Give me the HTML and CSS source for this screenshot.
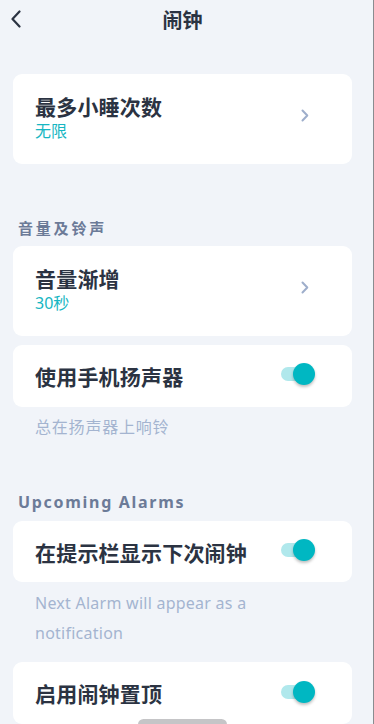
FILE: index.html
```html
<!DOCTYPE html>
<html lang="zh">
<head>
<meta charset="utf-8">
<link rel="stylesheet" href="styles.css">
</head>
<body>
<div class="screen">
  <div class="page">
    <header class="topbar">
      <svg class="back" width="12" height="18" viewBox="0 0 12 18"><path d="M9.5 1.5 L2.5 9 L9.5 16.5" fill="none" stroke="#2b3342" stroke-width="2.2" stroke-linecap="round" stroke-linejoin="round"/></svg>
      <div class="title">闹钟</div>
    </header>

    <div class="card card-tall first">
      <div class="texts">
        <div class="item-title">最多小睡次数</div>
        <div class="item-sub">无限</div>
      </div>
      <svg class="chev" width="8" height="13" viewBox="0 0 8 13"><path d="M1.5 1.5 L6.3 6.5 L1.5 11.5" fill="none" stroke="#9eaecb" stroke-width="2" stroke-linecap="round" stroke-linejoin="round"/></svg>
    </div>

    <div class="section sec1">音量及铃声</div>

    <div class="card card-tall">
      <div class="texts">
        <div class="item-title">音量渐增</div>
        <div class="item-sub">30秒</div>
      </div>
      <svg class="chev" width="8" height="13" viewBox="0 0 8 13"><path d="M1.5 1.5 L6.3 6.5 L1.5 11.5" fill="none" stroke="#9eaecb" stroke-width="2" stroke-linecap="round" stroke-linejoin="round"/></svg>
    </div>

    <div class="card card-short gap">
      <div class="item-title">使用手机扬声器</div>
      <div class="toggle"><span class="track"></span><span class="thumb"></span></div>
    </div>
    <div class="desc cjk">总在扬声器上响铃</div>

    <div class="section sec2">Upcoming Alarms</div>

    <div class="card card-short">
      <div class="item-title">在提示栏显示下次闹钟</div>
      <div class="toggle"><span class="track"></span><span class="thumb"></span></div>
    </div>
    <div class="desc latin">Next Alarm will appear as a notification</div>

    <div class="card card-short last">
      <div class="item-title">启用闹钟置顶</div>
      <div class="toggle"><span class="track"></span><span class="thumb"></span></div>
    </div>
  </div>
  <div class="edge"></div>
  <div class="homebar"></div>
</div>
</body>
</html>
```

FILE: styles.css
```css
html, body {
  margin: 0;
  padding: 0;
  background: #f1f4f9;
}
body {
  font-family: "Noto Sans", "Noto Sans CJK SC", sans-serif;
  color: #2b3342;
}
.screen {
  position: relative;
  width: 374px;
  height: 724px;
  overflow: hidden;
  display: flex;
}
.page {
  width: 365px;
  display: flex;
  flex-direction: column;
}
.edge {
  position: absolute;
  right: 0;
  top: 0;
  width: 1px;
  height: 724px;
  background: #8a8c90;
}
.homebar {
  position: absolute;
  left: 138px;
  bottom: -6px;
  width: 89px;
  height: 11px;
  border-radius: 6px;
  background: #c5c5c7;
}
.topbar {
  position: relative;
  height: 40px;
  display: flex;
  align-items: center;
  justify-content: center;
}
.back {
  position: absolute;
  left: 10px;
  top: 10px;
}
.title {
  font-family: "Noto Sans CJK SC", sans-serif;
  font-size: 20px;
  font-weight: 700;
  line-height: 40px;
  color: #2b3342;
}
.card {
  margin: 0 13px;
  background: #ffffff;
  border-radius: 9px;
  display: flex;
  align-items: center;
  justify-content: space-between;
  padding: 0 37px 0 22px;
}
.card-tall {
  padding-top: 18px;
  padding-bottom: 22px;
  padding-right: 43px;
}
.card-short {
  height: 64px;
}
.first {
  margin-top: 34px;
}
.gap {
  margin-top: 9px;
}
.item-title {
  font-family: "Noto Sans CJK SC", sans-serif;
  font-size: 21px;
  font-weight: 700;
  line-height: 28px;
  color: #2b3342;
  letter-spacing: 0.2px;
}
.item-sub {
  font-family: "Noto Sans", "Noto Sans CJK SC", sans-serif;
  font-size: 16px;
  line-height: 22px;
  color: #17b6c2;
}
.chev {
  display: block;
  margin-top: -3px;
}
.section {
  font-weight: 700;
  color: #6c7b98;
  line-height: 20px;
  padding-left: 18px;
}
.sec1 {
  font-family: "Noto Sans CJK SC", sans-serif;
  font-size: 15px;
  letter-spacing: 2.8px;
  margin-top: 54px;
  margin-bottom: 8px;
}
.sec2 {
  font-family: "Noto Sans", sans-serif;
  font-size: 16px;
  letter-spacing: 1.7px;
  margin-top: 51px;
  margin-bottom: 9px;
}
.desc {
  font-family: "Noto Sans", "Noto Sans CJK SC", sans-serif;
  font-size: 16px;
  line-height: 30px;
  color: #a4b4d0;
  padding: 0 110px 0 35px;
  margin-top: 4px;
}
.desc.cjk {
  font-family: "Noto Sans CJK SC", sans-serif;
  letter-spacing: 0.8px;
}
.desc.latin {
  letter-spacing: 0.25px;
  margin-top: 6px;
}
.last {
  margin-top: 14px;
}
.toggle {
  position: relative;
  width: 34px;
  height: 22px;
  margin-top: -3px;
  flex: none;
}
.track {
  position: absolute;
  left: 0;
  top: 4px;
  width: 26px;
  height: 14px;
  border-radius: 7px;
  background: #b0e8ec;
}
.thumb {
  position: absolute;
  right: 0;
  top: 0;
  width: 22px;
  height: 22px;
  border-radius: 50%;
  background: #00b7c2;
  box-shadow: 0 2px 3px rgba(0, 0, 0, 0.25);
}
```
